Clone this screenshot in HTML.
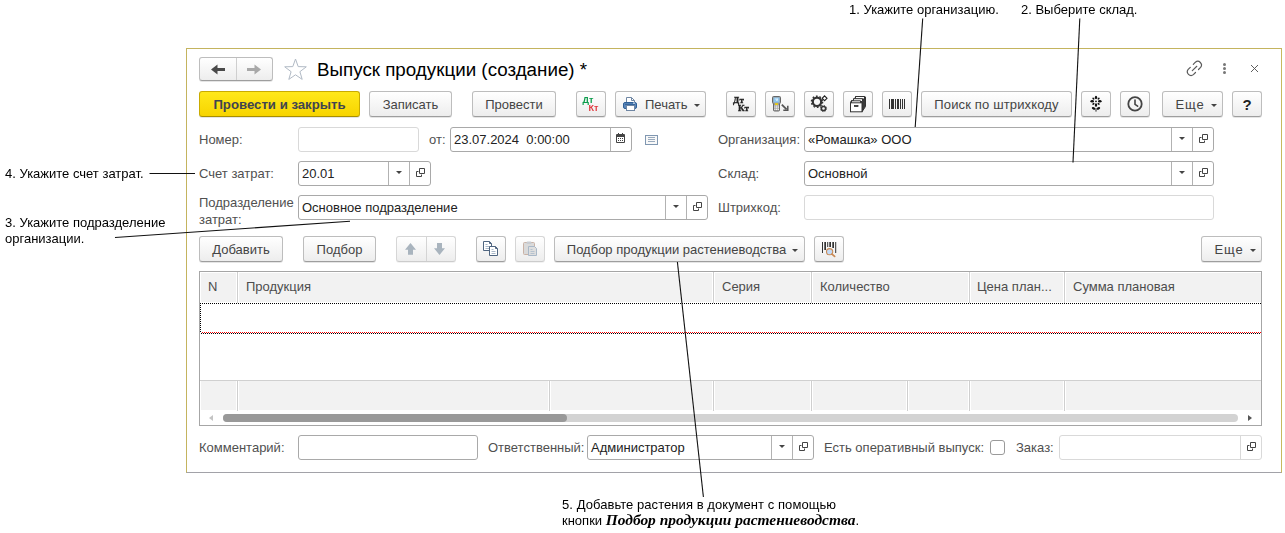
<!DOCTYPE html>
<html lang="ru">
<head>
<meta charset="utf-8">
<title>Выпуск продукции (создание)</title>
<style>
html,body{margin:0;padding:0;background:#fff;}
body{width:1285px;height:533px;position:relative;overflow:hidden;font-family:"Liberation Sans",Arial,sans-serif;font-size:13px;color:#333;}
.abs{position:absolute;}
.win{position:absolute;left:186px;top:48px;width:1094px;height:423px;border:1px solid #c4b45e;border-bottom-color:#a2a2a8;border-right:1px solid #c8b85e;box-sizing:content-box;background:#fff;}
.lbl{position:absolute;color:#505050;font-size:13px;line-height:15px;white-space:nowrap;}
.btn{position:absolute;box-sizing:border-box;border:1px solid #bdbdbd;border-bottom-color:#9e9e9e;border-radius:3px;background:linear-gradient(#ffffff,#ededed);box-shadow:0 1px 0 rgba(0,0,0,.10);color:#444;font-size:13px;text-align:center;white-space:nowrap;height:26px;top:91px;line-height:22px;padding-top:2px;}
.btn.y{background:linear-gradient(#ffe81a,#f7d400);border-color:#c9ab00;border-bottom-color:#a88f00;font-weight:bold;color:#3f4450;font-size:13.2px;}
.btn.dis{border-color:#d6d6d6;border-bottom-color:#cccccc;box-shadow:0 1px 0 rgba(0,0,0,.05);}
.inp{position:absolute;box-sizing:border-box;border:1px solid #a9a9a9;border-radius:3px;background:#fff;height:25px;font-size:13px;line-height:23px;color:#222;padding-left:3px;white-space:nowrap;}
.inp.lt{border-color:#d9d9d9;}
.inp .s{position:absolute;top:0;bottom:0;width:1px;background:#b2b2b2;}
.inp.lt .s{background:#d9d9d9;}
.dd{position:absolute;width:0;height:0;border-left:3px solid transparent;border-right:3px solid transparent;border-top:3px solid #444;top:9px;}
.op{position:absolute;top:6px;width:10px;height:10px;}
.note{position:absolute;font-family:"Liberation Sans",Arial,sans-serif;font-size:13px;line-height:17px;color:#000;white-space:nowrap;}
.caret{display:inline-block;width:0;height:0;border-left:3px solid transparent;border-right:3px solid transparent;border-top:3px solid #444;vertical-align:middle;margin-left:6px;margin-top:0px;}
.th{position:absolute;top:0;height:29px;line-height:29px;color:#4d4d4d;font-size:13px;white-space:nowrap;}
.vd{position:absolute;width:1px;background:#cfcfcf;border-left:1px solid #fff;border-right:1px solid #fff;margin-left:0;}
svg{position:absolute;overflow:visible;}
</style>
</head>
<body>

<!-- window frame -->
<div class="win"></div>

<!-- title bar -->
<div class="btn" style="left:199px;top:57px;width:74px;height:24px;"></div>
<div class="abs" style="left:236px;top:58px;width:1px;height:22px;background:#cfcfcf;"></div>
<div class="abs" style="left:317px;top:59px;font-size:18.8px;line-height:22px;color:#000;white-space:nowrap;">Выпуск продукции (создание) *</div>

<!-- main toolbar -->
<div class="btn y" style="left:199px;width:161px;">Провести и закрыть</div>
<div class="btn" style="left:369px;width:83px;">Записать</div>
<div class="btn" style="left:472px;width:84px;">Провести</div>
<div class="btn" style="left:576px;width:30px;"></div>
<div class="btn" style="left:615px;width:91px;text-align:left;padding-left:29px;">Печать<span class="caret"></span></div>
<div class="btn" style="left:726px;width:30px;"></div>
<div class="btn" style="left:765px;width:30px;"></div>
<div class="btn" style="left:804px;width:30px;"></div>
<div class="btn" style="left:843px;width:30px;"></div>
<div class="btn" style="left:882px;width:30px;"></div>
<div class="btn" style="left:921px;width:151px;letter-spacing:0.14px;">Поиск по штрихкоду</div>
<div class="btn" style="left:1081px;width:30px;"></div>
<div class="btn" style="left:1120px;width:30px;"></div>
<div class="btn" style="left:1162px;width:61px;padding-left:7px;letter-spacing:0.9px;">Еще<span class="caret" style="margin-left:6px"></span></div>
<div class="btn" style="left:1232px;width:30px;font-weight:bold;font-size:15px;color:#222;">?</div>

<!-- row 1 -->
<div class="lbl" style="left:199px;top:132px;">Номер:</div>
<div class="inp lt" style="left:298px;top:127px;width:121px;"></div>
<div class="lbl" style="left:429px;top:132px;">от:</div>
<div class="inp" style="left:450px;top:127px;width:182px;">23.07.2024&nbsp; 0:00:00<span class="s" style="left:159px;"></span></div>
<div class="lbl" style="left:718px;top:132px;">Организация:</div>
<div class="inp" style="left:804px;top:127px;width:410px;">«Ромашка» ООО<span class="s" style="left:366px;"></span><span class="s" style="left:387px;"></span><span class="dd" style="left:374px;"></span></div>

<!-- row 2 -->
<div class="lbl" style="left:199px;top:166px;">Счет затрат:</div>
<div class="inp" style="left:298px;top:161px;width:133px;">20.01<span class="s" style="left:89px;"></span><span class="s" style="left:110px;"></span><span class="dd" style="left:97px;"></span></div>
<div class="lbl" style="left:718px;top:166px;">Склад:</div>
<div class="inp" style="left:804px;top:161px;width:410px;">Основной<span class="s" style="left:366px;"></span><span class="s" style="left:387px;"></span><span class="dd" style="left:374px;"></span></div>

<!-- row 3 -->
<div class="lbl" style="left:199px;top:195px;line-height:16px;">Подразделение</div>
<div class="lbl" style="left:199px;top:212px;line-height:16px;">затрат:</div>
<div class="inp" style="left:298px;top:195px;width:410px;">Основное подразделение<span class="s" style="left:366px;"></span><span class="s" style="left:387px;"></span><span class="dd" style="left:374px;"></span></div>
<div class="lbl" style="left:718px;top:200px;">Штрихкод:</div>
<div class="inp lt" style="left:804px;top:195px;width:410px;"></div>

<!-- table toolbar -->
<div class="btn" style="left:199px;top:236px;width:84px;">Добавить</div>
<div class="btn" style="left:303px;top:236px;width:73px;">Подбор</div>
<div class="btn dis" style="left:396px;top:236px;width:60px;"></div>
<div class="abs" style="left:426px;top:237px;width:1px;height:24px;background:#d4d4d4;"></div>
<div class="btn" style="left:476px;top:236px;width:30px;"></div>
<div class="btn dis" style="left:515px;top:236px;width:30px;"></div>
<div class="btn" style="left:554px;top:236px;width:251px;padding-left:6px;">Подбор продукции растениеводства<span class="caret"></span></div>
<div class="btn" style="left:814px;top:236px;width:30px;"></div>
<div class="btn" style="left:1201px;top:236px;width:61px;padding-left:7px;letter-spacing:0.9px;">Еще<span class="caret" style="margin-left:6px"></span></div>

<!-- table -->
<div class="abs" id="tbl" style="left:199px;top:271px;width:1063px;height:155px;box-sizing:border-box;border:1px solid #a6a6a6;background:#fff;">
  <div class="abs" style="left:1px;top:1px;width:1060px;height:29px;background:#f2f2f2;"></div>
  <div class="th" style="left:8px;">N</div>
  <div class="th" style="left:46px;">Продукция</div>
  <div class="th" style="left:522px;">Серия</div>
  <div class="th" style="left:620px;">Количество</div>
  <div class="th" style="left:777px;">Цена план...</div>
  <div class="th" style="left:873px;">Сумма плановая</div>
  <div class="vd" style="left:36px;top:0;height:31px;"></div>
  <div class="vd" style="left:512px;top:0;height:31px;"></div>
  <div class="vd" style="left:610px;top:0;height:31px;"></div>
  <div class="vd" style="left:768px;top:0;height:31px;"></div>
  <div class="vd" style="left:863px;top:0;height:31px;"></div>
  <!-- current row -->
  <div class="abs" style="left:0;top:31px;width:1061px;height:1px;background:repeating-linear-gradient(90deg,#000 0,#000 1px,transparent 1px,transparent 2px);"></div>
  <div class="abs" style="left:0;top:31px;width:1px;height:30px;background:repeating-linear-gradient(180deg,#000 0,#000 1px,transparent 1px,transparent 2px);"></div>
  <div class="abs" style="left:2px;top:60px;width:1059px;height:1px;background:repeating-linear-gradient(90deg,#f00 0,#f00 1px,transparent 1px,transparent 2px);"></div>
  <div class="abs" style="left:1px;top:61px;width:1060px;height:1px;background:repeating-linear-gradient(90deg,#000 0,#000 1px,transparent 1px,transparent 2px);"></div>
  <!-- footer -->
  <div class="abs" style="left:0;top:108px;width:1061px;height:1px;background:#d0d0d0;"></div>
  <div class="abs" style="left:1px;top:109px;width:1060px;height:29px;background:#f2f2f2;"></div>
  <div class="vd" style="left:36px;top:109px;height:30px;"></div>
  <div class="vd" style="left:348px;top:109px;height:30px;"></div>
  <div class="vd" style="left:512px;top:109px;height:30px;"></div>
  <div class="vd" style="left:610px;top:109px;height:30px;"></div>
  <div class="vd" style="left:706px;top:109px;height:30px;"></div>
  <div class="vd" style="left:768px;top:109px;height:30px;"></div>
  <div class="vd" style="left:863px;top:109px;height:30px;"></div>
  <!-- scrollbar -->
  <div class="abs" style="left:23px;top:142px;width:1015px;height:8px;border-radius:4px;background:#d3d3d3;"></div>
  <div class="abs" style="left:23px;top:142px;width:344px;height:8px;border-radius:4px;background:#999;"></div>
  <div class="abs" style="left:9px;top:143px;width:0;height:0;border-top:3px solid transparent;border-bottom:3px solid transparent;border-right:4px solid #c4c4c4;"></div>
  <div class="abs" style="left:1048px;top:143px;width:0;height:0;border-top:3px solid transparent;border-bottom:3px solid transparent;border-left:4px solid #555;"></div>
</div>

<!-- bottom row -->
<div class="lbl" style="left:199px;top:440px;">Комментарий:</div>
<div class="inp" style="left:298px;top:435px;width:180px;"></div>
<div class="lbl" style="left:488px;top:440px;">Ответственный:</div>
<div class="inp" style="left:587px;top:435px;width:227px;">Администратор<span class="s" style="left:183px;"></span><span class="s" style="left:204px;"></span><span class="dd" style="left:191px;"></span></div>
<div class="lbl" style="left:824px;top:440px;">Есть оперативный выпуск:</div>
<div class="abs" style="left:990px;top:440px;width:15px;height:15px;box-sizing:border-box;border:1px solid #9a9a9a;border-radius:3px;background:#fff;"></div>
<div class="lbl" style="left:1016px;top:440px;">Заказ:</div>
<div class="inp lt" style="left:1059px;top:435px;width:203px;"><span class="s" style="left:180px;"></span></div>


<!-- icons overlay -->
<svg id="icons" style="left:0;top:0;will-change:transform;" width="1285" height="533" viewBox="0 0 1285 533">
  <!-- nav arrows -->
  <path d="M211 69.5 L217.5 64.5 L217.5 68 L225 68 L225 71 L217.5 71 L217.5 74.5 Z" fill="#4a4a4a"/>
  <path d="M261 69.5 L254.5 64.5 L254.5 68 L247 68 L247 71 L254.5 71 L254.5 74.5 Z" fill="#a8a8a8"/>
  <!-- star -->
  <path d="M295.5 59 L298.2 66.6 L306.3 66.8 L299.9 71.7 L302.2 79.4 L295.5 74.8 L288.8 79.4 L291.1 71.7 L284.7 66.8 L292.8 66.6 Z" fill="#fff" stroke="#b0b9c4" stroke-width="1"/>
  <!-- link -->
  <g fill="none" stroke="#5a5a5a" stroke-width="1.2" stroke-linecap="round">
    <path d="M1193.3 64.3 L1195.4 62.2 A3.7 3.7 0 0 1 1200.6 67.4 L1198.5 69.5"/>
    <path d="M1190.3 67.3 L1188.2 69.4 A3.7 3.7 0 0 0 1193.4 74.6 L1195.5 72.5"/>
    <path d="M1192.3 70.6 L1196.8 66.3"/>
  </g>
  <!-- dots -->
  <g fill="#777"><circle cx="1224.5" cy="64.5" r="1.5"/><circle cx="1224.5" cy="68.5" r="1.5"/><circle cx="1224.5" cy="72.5" r="1.5"/></g>
  <!-- close -->
  <path d="M1251 65 L1258 72 M1258 65 L1251 72" stroke="#555" stroke-width="0.95" fill="none"/>

  <!-- DtKt colour -->
  <text x="582.5" y="103" font-family="Liberation Sans, Arial, sans-serif" font-weight="bold" font-size="9px" fill="#0a9b4a">Дт</text>
  <text x="588.5" y="111" font-family="Liberation Sans, Arial, sans-serif" font-weight="bold" font-size="9px" fill="#e0393e">Кт</text>
  <!-- printer -->
  <g>
    <path d="M626.5 102.5 V97.5 H631.5 L634.5 100.5 V102.5 Z" fill="#fff" stroke="#6f86a3" stroke-width="1"/>
    <path d="M631.5 97.5 V100.5 H634.5" fill="none" stroke="#6f86a3" stroke-width="1"/>
    <rect x="623.5" y="102.5" width="13" height="6" rx="1.5" fill="#5b87ba" stroke="#2f5f96" stroke-width="1"/>
    <rect x="625" y="103.8" width="10" height="1" fill="#2f5f96"/>
    <rect x="633" y="102.6" width="2" height="1" fill="#e8f0fa"/>
    <rect x="626.5" y="105.5" width="8" height="5" fill="#fff" stroke="#6f86a3" stroke-width="1"/>
  </g>
  <!-- DtKt black -->
  <text x="733" y="102.9" font-family="Liberation Serif, serif" font-weight="bold" font-size="9px" fill="#222" stroke="#222" stroke-width="0.35" letter-spacing="0.3">Дт</text>
  <text x="738" y="110.9" font-family="Liberation Serif, serif" font-weight="bold" font-size="9px" fill="#222" stroke="#222" stroke-width="0.35" letter-spacing="0.3">Кт</text>
  <!-- TSD -->
  <g>
    <path d="M772.5 97.5 a1 1 0 0 1 1 -1 h6 a1 1 0 0 1 1 1 v5 l-1 1.5 v6 a1 1 0 0 1 -1 1 h-4 a1 1 0 0 1 -1 -1 v-6 l-1 -1.5 z" fill="#9a9a9a" stroke="#666" stroke-width="1"/>
    <rect x="773.5" y="97.5" width="6" height="5" fill="#8cc6ee"/>
    <path d="M775 99 h3 l-2 1.2 h2" stroke="#e9f5ff" stroke-width="0.8" fill="none"/>
    <rect x="775" y="103.3" width="3" height="1.6" fill="#f2d100"/>
    <g fill="#f4f4f4"><rect x="774.3" y="105.5" width="1.2" height="1.2"/><rect x="776" y="105.5" width="1.2" height="1.2"/><rect x="777.7" y="105.5" width="1.2" height="1.2"/><rect x="774.3" y="107.2" width="1.2" height="1.2"/><rect x="776" y="107.2" width="1.2" height="1.2"/><rect x="777.7" y="107.2" width="1.2" height="1.2"/><rect x="774.3" y="108.9" width="1.2" height="1.2"/><rect x="776" y="108.9" width="1.2" height="1.2"/><rect x="777.7" y="108.9" width="1.2" height="1.2"/></g>
    <path d="M781.8 104.6 L786.6 109.4" stroke="#555" stroke-width="1.8" fill="none"/>
    <path d="M783.3 110.2 H787.8 V105.8" stroke="#555" stroke-width="1.5" fill="none"/>
  </g>
  <!-- gears -->
  <g>
    <circle cx="817" cy="101.8" r="4.2" fill="none" stroke="#333" stroke-width="2.2"/>
    <circle cx="817" cy="101.8" r="5.6" fill="none" stroke="#333" stroke-width="1.4" stroke-dasharray="1.7 1.82"/>
    <circle cx="823.5" cy="108.5" r="2.1" fill="none" stroke="#333" stroke-width="1.5"/>
    <circle cx="823.5" cy="108.5" r="3.1" fill="none" stroke="#333" stroke-width="1" stroke-dasharray="1.1 1.33"/>
    <path d="M824.6 95.9 L827 98.3 L824.6 100.7 L822.2 98.3 Z" fill="#fff" stroke="#222" stroke-width="1.1"/>
  </g>
  <!-- archive -->
  <g stroke="#333" stroke-width="1" fill="#fff">
    <path d="M855.5 96.5 H865 L865.5 97 V106.5 L862 111.8 V102.5 H850.5 L851.5 100.5 H853 L854 98.5 H855 Z" fill="#3a3a3a"/>
    <path d="M855.5 96.5 H864.5 V99 H855.5 Z"/>
    <path d="M853.5 98.7 H862.5 V101.5 H853.5 Z"/>
    <path d="M851.5 100.8 H860.5 V103.5 H851.5 Z"/>
    <rect x="850.5" y="102.8" width="11.5" height="9" />
    <rect x="854.5" y="105.5" width="3.5" height="1" fill="#333" stroke-width="0.8"/>
  </g>
  <!-- barcode -->
  <g fill="#333">
    <rect x="889" y="99" width="1" height="10"/><rect x="891" y="99" width="3" height="10"/><rect x="895" y="99" width="1" height="10"/><rect x="897" y="99" width="2" height="10"/><rect x="900" y="99" width="1" height="10"/><rect x="902" y="99" width="1" height="10"/><rect x="904" y="99" width="1" height="10"/>
  </g>
  <!-- flower -->
  <g fill="#111">
    <circle cx="1096" cy="101.3" r="0.9"/>
    <ellipse cx="1096" cy="97.5" rx="1.2" ry="1.8"/>
    <ellipse cx="1096" cy="105.1" rx="1.2" ry="1.8"/>
    <ellipse cx="1092.2" cy="101.3" rx="1.8" ry="1.2"/>
    <ellipse cx="1099.8" cy="101.3" rx="1.8" ry="1.2"/>
    <ellipse cx="1093.4" cy="98.7" rx="1.2" ry="0.9" transform="rotate(45 1093.4 98.7)"/>
    <ellipse cx="1098.6" cy="98.7" rx="1.2" ry="0.9" transform="rotate(-45 1098.6 98.7)"/>
    <ellipse cx="1093.4" cy="103.9" rx="1.2" ry="0.9" transform="rotate(-45 1093.4 103.9)"/>
    <ellipse cx="1098.6" cy="103.9" rx="1.2" ry="0.9" transform="rotate(45 1098.6 103.9)"/>
    <ellipse cx="1093.6" cy="108.4" rx="1.9" ry="1.2" transform="rotate(25 1093.6 108.4)"/>
    <ellipse cx="1098.4" cy="108.4" rx="1.9" ry="1.2" transform="rotate(-25 1098.4 108.4)"/>
    <rect x="1095" y="108" width="2" height="3.6" fill="#888"/>
  </g>
  <!-- clock -->
  <circle cx="1135" cy="103.9" r="6.7" fill="none" stroke="#444" stroke-width="1.8"/>
  <path d="M1135 100 V104.3 L1137.6 106.2" fill="none" stroke="#444" stroke-width="1.6" stroke-linecap="round"/>

  <!-- calendar -->
  <g>
    <rect x="616" y="134" width="9" height="9" rx="1" fill="#444"/>
    <rect x="617" y="137" width="7" height="5" fill="#fff"/>
    <rect x="618" y="133" width="1" height="2" fill="#444"/><rect x="622" y="133" width="1" height="2" fill="#444"/>
    <g fill="#444"><rect x="618" y="138" width="1" height="1"/><rect x="620" y="138" width="1" height="1"/><rect x="622" y="138" width="1" height="1"/><rect x="618" y="140" width="1" height="1"/><rect x="620" y="140" width="1" height="1"/><rect x="622" y="140" width="1" height="1"/></g>
  </g>
  <!-- list icon -->
  <rect x="645.5" y="135.5" width="12" height="9" fill="#f8f8f8" stroke="#8097b1" stroke-width="1"/>
  <path d="M648 137.5 h7 M648 139.5 h7 M648 141.5 h7" stroke="#8da0b6" stroke-width="0.9" fill="none"/>

  <!-- open icons -->
  <path d="M1202.5 134.5h5v5h-5z M1201.5 137.5h-2v5h5v-2" fill="none" stroke="#444" stroke-width="1"/>
  <path d="M419.5 168.5h5v5h-5z M418.5 171.5h-2v5h5v-2" fill="none" stroke="#444" stroke-width="1"/>
  <path d="M1202.5 168.5h5v5h-5z M1201.5 171.5h-2v5h5v-2" fill="none" stroke="#444" stroke-width="1"/>
  <path d="M696.5 202.5h5v5h-5z M695.5 205.5h-2v5h5v-2" fill="none" stroke="#444" stroke-width="1"/>
  <path d="M802.5 442.5h5v5h-5z M801.5 445.5h-2v5h5v-2" fill="none" stroke="#444" stroke-width="1"/>
  <path d="M1250.5 442.5h5v5h-5z M1249.5 445.5h-2v5h5v-2" fill="none" stroke="#444" stroke-width="1"/>

  <!-- up/down arrows -->
  <path d="M410.5 243 L416 249.7 H413 V254.7 H408 V249.7 H405 Z" fill="#a9b4be"/>
  <path d="M439.5 254.9 L434 248.3 H437 V243.1 H442 V248.3 H445 Z" fill="#a9b4be"/>
  <!-- copy -->
  <g stroke="#4f6580" stroke-width="1" fill="#fff">
    <path d="M483.5 241.5 H489.5 L491.5 243.5 V250.5 H483.5 Z"/>
    <path d="M489.5 241.5 V243.5 H491.5" fill="none"/>
    <path d="M485.5 244.5 h2 M485.5 246.5 h4 M485.5 248.5 h4" stroke="#a9b8c8" fill="none"/>
    <path d="M489.5 246.5 H495.5 L497.5 248.5 V255.5 H489.5 Z"/>
    <path d="M495.5 246.5 V248.5 H497.5" fill="none"/>
    <path d="M491.5 249.5 h2 M491.5 251.5 h4 M491.5 253.5 h4" stroke="#a9b8c8" fill="none"/>
  </g>
  <!-- paste (disabled) -->
  <g>
    <rect x="523.5" y="242.5" width="11" height="12" rx="1" fill="#dadada" stroke="#c9b2a6" stroke-width="1"/>
    <rect x="526.5" y="241.5" width="5" height="2.5" rx="1" fill="#c8ccd2"/>
    <path d="M528.5 246.5 H534.5 L536.5 248.5 V255.5 H528.5 Z" fill="#dedede" stroke="#a9b8c8" stroke-width="1"/>
    <path d="M530.5 249.5 h2 M530.5 251.5 h4 M530.5 253.5 h4" stroke="#b5c2cf" fill="none"/>
  </g>
  <!-- barcode search -->
  <g fill="#333">
    <rect x="822" y="242" width="1" height="11"/><rect x="824.3" y="242" width="1.7" height="8"/><rect x="827.2" y="242" width="1" height="5"/><rect x="829.3" y="242" width="1.7" height="5"/><rect x="832.3" y="242" width="1.7" height="6"/><rect x="835.2" y="242" width="1" height="11"/>
  </g>
  <circle cx="829.6" cy="251.7" r="3.1" fill="#c2daf6" stroke="#c98a55" stroke-width="1.1"/>
  <path d="M832 254.1 L834.6 256.4" stroke="#c98a55" stroke-width="1.7" stroke-linecap="round"/>
</svg>

<!-- annotations -->
<div class="note" style="left:849px;top:1px;">1. Укажите организацию.</div>
<div class="note" style="left:1021px;top:1px;">2. Выберите склад.</div>
<div class="note" style="left:5px;top:165px;">4. Укажите счет затрат.</div>
<div class="note" style="left:5px;top:215px;line-height:16px;">3. Укажите подразделение<br>организации.</div>
<div class="note" style="left:562px;top:497px;line-height:16px;"><span style="letter-spacing:0.06px;">5. Добавьте растения в документ с помощью</span><br>кнопки <span style="font-family:'Liberation Serif',serif;font-weight:bold;font-style:italic;font-size:15.45px;line-height:1px;">Подбор продукции растениеводства</span>.</div>

<svg style="left:0;top:0;" width="1285" height="533" viewBox="0 0 1285 533">
  <g stroke="#111" stroke-width="1.1" fill="none">
    <line x1="922.7" y1="18.5" x2="915.2" y2="127"/>
    <line x1="1079.8" y1="18.5" x2="1073" y2="162.5"/>
    <line x1="149.5" y1="173.5" x2="195" y2="173.5"/>
    <line x1="115" y1="237.5" x2="350" y2="221.3"/>
    <line x1="677.4" y1="262" x2="703.4" y2="497"/>
  </g>
</svg>

</body>
</html>
